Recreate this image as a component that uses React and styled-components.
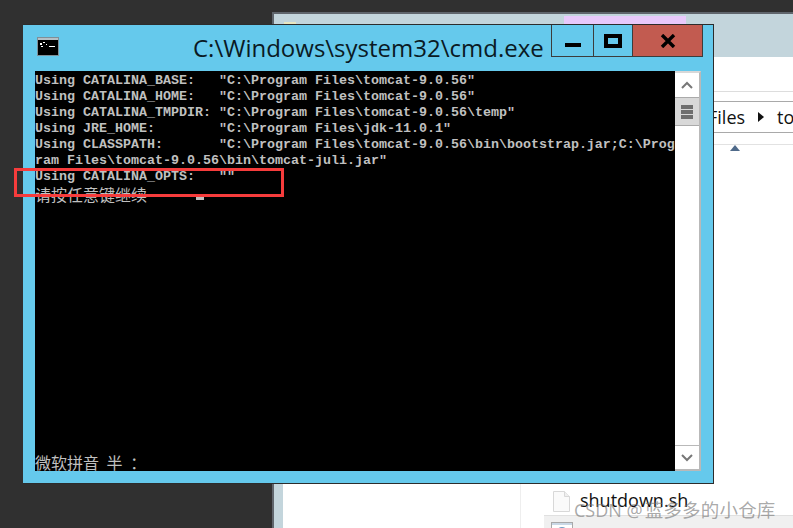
import React from 'react';
import styled, { createGlobalStyle } from 'styled-components';

const Global = createGlobalStyle`
  html, body { margin: 0; padding: 0; background: #303030; }
`;

const Desktop = styled.div`
  position: relative;
  width: 793px;
  height: 528px;
  overflow: hidden;
  background: #303030;
`;

const Explorer = styled.div`
  position: absolute;
  left: 272px;
  top: 12px;
  width: 540px;
  height: 530px;
  box-sizing: border-box;
  border: 2px solid #5f656c;
  border-bottom: 0;
  background: #c3d5dc;
  padding: 43px 0 0 9px;
`;

const PinkTab = styled.div`
  position: absolute;
  left: 290px;
  top: 2px;
  width: 122px;
  height: 9px;
  background: #e8c9fb;
`;

const FramePeek = styled.div`
  position: absolute;
  left: 10px;
  top: 8px;
  width: 12px;
  height: 3px;
  background: #e9e6c0;
`;

const ExplorerBody = styled.div`
  height: 100%;
  background: #fff;
  padding-top: 34px;
  box-sizing: border-box;
  font-family: "Open Sans", sans-serif;
  color: #111;
`;

const Ribbon = styled.div`
  height: 9px;
  border-top: 1px solid #ddd;
`;

const AddressBar = styled.div`
  height: 30px;
  border-top: 1px solid #a9a9a9;
  border-bottom: 1px solid #a9a9a9;
  display: flex;
  align-items: center;
  gap: 13px;
  padding-left: 425px;
  font-size: 18px;
  white-space: nowrap;
`;

const Chevron = styled.i`
  width: 0;
  height: 0;
  flex: none;
  border-left: 6px solid #111;
  border-top: 5.5px solid transparent;
  border-bottom: 5.5px solid transparent;
`;

const SortHeader = styled.div`
  height: 11px;
  border-bottom: 1px solid #e2e2e2;
`;

const Sort = styled.i`
  display: block;
  width: 0;
  height: 0;
  margin-left: 447px;
  border-bottom: 6px solid #4f6a8a;
  border-left: 5.5px solid transparent;
  border-right: 5.5px solid transparent;
`;

const FileList = styled.div`
  margin-left: 237px;
  padding: 337px 0 0 23px;
  border-left: 1px solid #eee;
`;

const FileRow = styled.div`
  display: flex;
  align-items: flex-start;
  height: 27px;
  gap: 10px;
  padding-left: 9px;
  font-size: 18px;
  line-height: 24px;
`;

const SelectedRow = styled(FileRow)`
  gap: 7px;
  padding: 5px 0 0 7px;
  background: #f0f0f0;
  border-top: 1px solid #e0e0e0;
`;

const SelectedName = styled.span`
  margin-top: 3px;
`;

const FileGlyph = styled.svg`
  width: 17px;
  height: 21px;
  margin-top: 3px;
  flex: none;
`;

const BatGlyph = styled.svg`
  width: 22px;
  height: 22px;
  margin-top: 1px;
  flex: none;
`;

const CmdWindow = styled.div`
  position: absolute;
  left: 23px;
  top: 24px;
  width: 691px;
  height: 460px;
  box-sizing: border-box;
  background: #65c9ec;
  border-right: 1px solid #2c2c2c;
  border-bottom: 1px solid #2c2c2c;
  border-top: 1px solid #2c2c2c;
  padding: 0 12px 12px;
  display: flex;
  flex-direction: column;
`;

const TitleBar = styled.div`
  height: 46px;
  display: flex;
  align-items: flex-start;
  flex: none;
`;

const AppIcon = styled.svg`
  width: 22px;
  height: 19px;
  margin: 12px 0 0 2px;
  flex: none;
`;

const Title = styled.div`
  font-family: "Open Sans", sans-serif;
  font-size: 24px;
  line-height: 32px;
  color: #0a1a24;
  margin-left: 134px;
  margin-top: 7px;
  width: 358px;
  flex: none;
  white-space: nowrap;
`;

const Controls = styled.div`
  display: flex;
  flex: none;
  height: 32px;
  border: 1px solid #3c3c3c;
  border-top: 0;
  box-sizing: border-box;
`;

const Ctl = styled.div`
  width: ${p => p.$w}px;
  box-sizing: border-box;
  background: ${p => p.$bg || 'transparent'};
  border-left: ${p => (p.$first ? '0' : '1px solid #3c3c3c')};
  display: flex;
  align-items: center;
  justify-content: center;
`;

const MinGlyph = styled.svg`
  margin-top: 9px;
`;

const Console = styled.div`
  flex: 1;
  display: flex;
  min-height: 0;
`;

const Screen = styled.div`
  width: 640px;
  background: #000;
  color: #c0c0c0;
  padding-top: 2px;
  position: relative;
  overflow: hidden;
`;

const Line = styled.div`
  font-family: "Liberation Mono", "DejaVu Sans Mono", monospace;
  font-size: 13.33px;
  font-weight: 700;
  line-height: 16px;
  height: 16px;
  white-space: pre;
`;

const CjkLine = styled.div`
  font-family: "Noto Sans CJK SC", sans-serif;
  font-size: 16px;
  font-weight: 400;
  line-height: 18px;
  height: 16px;
  white-space: pre;
  word-spacing: 4px;
`;

const Cursor = styled.span`
  position: absolute;
  left: 161px;
  top: 126px;
  width: 8px;
  height: 3px;
  background: #c0c0c0;
`;

const Ime = styled(CjkLine)`
  position: absolute;
  left: 0;
  bottom: 0;
  height: 18px;
  line-height: 18px;
`;

const Scrollbar = styled.div`
  width: 26px;
  box-sizing: border-box;
  background: #fff;
  border: 2px solid #b9b9b9;
  border-left: 0;
  border-top-color: #d8d8d8;
  display: flex;
  flex-direction: column;
`;

const ScrollBtn = styled.div`
  height: 24px;
  box-sizing: border-box;
  flex: none;
  display: flex;
  align-items: center;
  justify-content: center;
`;

const Thumb = styled.div`
  height: 29px;
  flex: none;
  box-sizing: border-box;
  background: #d8d8d8;
  border-top: 1px solid #aaa;
  border-bottom: 1px solid #aaa;
  display: flex;
  flex-direction: column;
  align-items: center;
  justify-content: center;
  gap: 1px;
`;

const Grip = styled.i`
  display: block;
  width: 12px;
  height: 4px;
  background: #6e6e6e;
`;

const Track = styled.div`
  flex: 1;
`;

const DownBtn = styled(ScrollBtn)`
  border-top: 1px solid #b9b9b9;
`;

const RedBox = styled.div`
  position: absolute;
  left: 14px;
  top: 168px;
  width: 270px;
  height: 29px;
  box-sizing: border-box;
  border: 3px solid #f63c3c;
`;

const Watermark = styled.div`
  position: absolute;
  left: 574px;
  top: 497px;
  font-family: "Open Sans", sans-serif;
  font-size: 18px;
  line-height: 24px;
  color: rgba(115, 115, 115, 0.62);
  white-space: nowrap;
`;

const WatermarkCjk = styled.span`
  font-family: "Noto Sans CJK SC", sans-serif;
  font-size: 18.5px;
  letter-spacing: 0.2px;
  margin-left: 2px;
`;

const prog = '"C:\\Program Files\\tomcat-9.0.56';

export default function App() {
  return (
    <Desktop>
      <Global />
      <Explorer>
        <PinkTab />
        <FramePeek />
        <ExplorerBody>
          <Ribbon />
          <AddressBar>
            <span>Files</span>
            <Chevron />
            <span>tomcat-9.0.56</span>
          </AddressBar>
          <SortHeader />
          <Sort />
          <FileList>
            <FileRow>
              <FileGlyph viewBox="0 0 17 21">
                <path d="M.5.5h11l5 5v15H.5z" fill="#fafafa" stroke="#d8d8d8" />
                <path d="M11.5.5v5h5" fill="#efefef" stroke="#d8d8d8" />
              </FileGlyph>
              <span>shutdown.sh</span>
            </FileRow>
            <SelectedRow>
              <BatGlyph viewBox="0 0 22 22">
                <rect x=".5" y=".5" width="21" height="21" fill="#fff" stroke="#a8a8a8" />
                <rect x="1" y="1" width="20" height="2" fill="#c9d8e6" />
                <circle cx="11" cy="11" r="5" fill="#cfe2f2" stroke="#6f9cc4" strokeWidth="2" />
              </BatGlyph>
              <SelectedName>shutdown.bat</SelectedName>
            </SelectedRow>
          </FileList>
        </ExplorerBody>
      </Explorer>
      <CmdWindow>
        <TitleBar>
          <AppIcon viewBox="0 0 22 19">
            <rect x="0.5" y="0.5" width="21" height="18" fill="#000" stroke="#7f8f98" />
            <rect x="1" y="1" width="20" height="2" fill="#b5c0c6" />
            <path d="M3 6h2v2H3zM6 5h2v1H6zM9 7h1v1H9zM12 9h6v1h-6zM4 9h2v1H4z" fill="#fff" />
          </AppIcon>
          <Title>C:\Windows\system32\cmd.exe</Title>
          <Controls>
            <Ctl $w={41} $first>
              <MinGlyph width="16" height="4"><rect width="16" height="4" fill="#000" /></MinGlyph>
            </Ctl>
            <Ctl $w={39}>
              <svg width="18" height="14"><rect x="2" y="2" width="14" height="10" fill="none" stroke="#000" strokeWidth="4" /></svg>
            </Ctl>
            <Ctl $w={70} $bg="#c25b50">
              <svg width="16" height="14" viewBox="0 0 16 14"><path d="M2 1l12 12M14 1L2 13" stroke="#000" strokeWidth="3.4" /></svg>
            </Ctl>
          </Controls>
        </TitleBar>
        <Console>
          <Screen>
            <Line>{`Using CATALINA_BASE:   ${prog}"`}</Line>
            <Line>{`Using CATALINA_HOME:   ${prog}"`}</Line>
            <Line>{`Using CATALINA_TMPDIR: ${prog}\\temp"`}</Line>
            <Line>{`Using JRE_HOME:        "C:\\Program Files\\jdk-11.0.1"`}</Line>
            <Line>{`Using CLASSPATH:       ${prog}\\bin\\bootstrap.jar;C:\\Prog`}</Line>
            <Line>{`ram Files\\tomcat-9.0.56\\bin\\tomcat-juli.jar"`}</Line>
            <Line>{`Using CATALINA_OPTS:   ""`}</Line>
            <CjkLine>请按任意键继续</CjkLine>
            <Cursor />
            <Ime>微软拼音 半 ：</Ime>
          </Screen>
          <Scrollbar>
            <ScrollBtn>
              <svg width="12" height="8" viewBox="0 0 12 8"><path d="M1 7l5-5 5 5" fill="none" stroke="#777" strokeWidth="2" /></svg>
            </ScrollBtn>
            <Thumb>
              <Grip />
              <Grip />
              <Grip />
            </Thumb>
            <Track />
            <DownBtn>
              <svg width="12" height="8" viewBox="0 0 12 8"><path d="M1 1l5 5 5-5" fill="none" stroke="#777" strokeWidth="2" /></svg>
            </DownBtn>
          </Scrollbar>
        </Console>
      </CmdWindow>
      <RedBox />
      <Watermark>CSDN @<WatermarkCjk>蓝多多的小仓库</WatermarkCjk></Watermark>
    </Desktop>
  );
}
